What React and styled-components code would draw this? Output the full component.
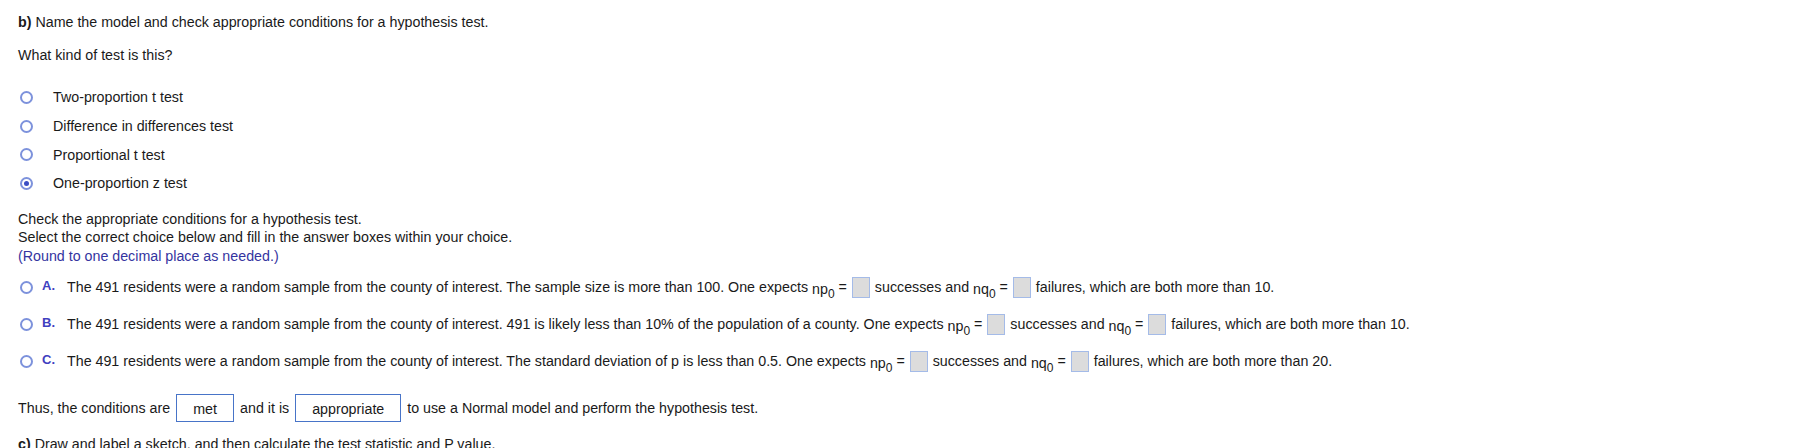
import React from 'react';
import styled, {createGlobalStyle} from 'styled-components';

const Global = createGlobalStyle`
    body {
        margin: 0;
        background: #fff;
        font-family: "Liberation Sans", Arial, sans-serif;
        font-size: 14.25px;
        color: #1a1a1a;
        overflow: hidden;
    }
`;

const Color = {
    RING: '#7d92dc',
    DOT: '#3c4fc4',
    LETTER: '#4040bf',
    NOTE: '#34349f',
    BORDER: '#4874c8',
    CELL: '#dcdcdc',
    CELL_BORDER: '#a4bbe8',
};

const questions = [
    'Two-proportion t test',
    'Difference in differences test',
    'Proportional t test',
    'One-proportion z test',
];

const choices = [
    {
        letter: 'A.',
        lead: 'The 491 residents were a random sample from the county of interest. The sample size is more than 100. One expects',
        limit: 10,
    },
    {
        letter: 'B.',
        lead: 'The 491 residents were a random sample from the county of interest. 491 is likely less than 10% of the population of a county. One expects',
        limit: 10,
    },
    {
        letter: 'C.',
        lead: 'The 491 residents were a random sample from the county of interest. The standard deviation of p is less than 0.5. One expects',
        limit: 20,
    },
];

function Expr ({sym}) {
    return (
        <MathVar>{sym}<Sub>0</Sub></MathVar>
    )
}

function App () {

    return (
        <Page>
            <Global/>
            <Heading><b>b)</b> Name the model and check appropriate conditions for a hypothesis test.</Heading>
            <Question>What kind of test is this?</Question>

            <Options>
                {questions.map((q, i) => (
                    <Option key={q}>
                        <Radio checked={i === 3}/>
                        <OptionLabel>{q}</OptionLabel>
                    </Option>
                ))}
            </Options>

            <Instructions>
                <Line>Check the appropriate conditions for a hypothesis test.</Line>
                <Line>Select the correct choice below and fill in the answer boxes within your choice.</Line>
                <Note>(Round to one decimal place as needed.)</Note>
            </Instructions>

            <Choices>
                {choices.map(c => (
                    <Choice key={c.letter}>
                        <Radio/>
                        <Letter>{c.letter}</Letter>
                        <ChoiceText>
                            {c.lead} <Expr sym="np"/> = <Cell/> successes and <Expr sym="nq"/> = <Cell/> failures, which are both more than {c.limit}.
                        </ChoiceText>
                    </Choice>
                ))}
            </Choices>

            <Conclusion>
                Thus, the conditions are
                <Answer width={58}>met</Answer>
                and it is
                <Answer width={106}>appropriate</Answer>
                to use a Normal model and perform the hypothesis test.
            </Conclusion>

            <Heading next><b>c)</b> Draw and label a sketch, and then calculate the test statistic and P value.</Heading>
        </Page>
    )
}

const Page = styled.div`
    padding: 13px 18px 0;
`;
const Heading = styled.div`
    line-height: 18px;
    margin-top: ${p => p.next ? '13.5px' : '0'};
    b {
        font-weight: bold;
    }
`;
const Question = styled.div`
    line-height: 18px;
    margin-top: 15px;
`;
const Options = styled.div`
    margin-top: 19px;
    display: flex;
    flex-direction: column;
`;
const Option = styled.div`
    height: 28.7px;
    display: flex;
    align-items: center;
    padding-left: 2px;
`;
const Radio = styled.span`
    flex: none;
    box-sizing: border-box;
    width: 13px;
    height: 13px;
    border-radius: 50%;
    border: 2px solid ${Color.RING};
    background: #fff;
    display: flex;
    align-items: center;
    justify-content: center;
    &::after {
        content: '';
        display: ${p => p.checked ? 'block' : 'none'};
        width: 5px;
        height: 5px;
        border-radius: 50%;
        background: ${Color.DOT};
    }
`;
const OptionLabel = styled.span`
    margin-left: 20px;
`;
const Instructions = styled.div`
    margin-top: 12px;
    line-height: 18.5px;
`;
const Line = styled.div`
`;
const Note = styled.div`
    color: ${Color.NOTE};
`;
const Choices = styled.div`
    margin-top: 3.5px;
    display: flex;
    flex-direction: column;
`;
const Choice = styled.div`
    height: 37px;
    display: flex;
    align-items: center;
    padding-left: 2px;
    white-space: nowrap;
`;
const Letter = styled.span`
    width: 25px;
    margin-left: 9px;
    color: ${Color.LETTER};
    font-weight: bold;
    font-size: 13px;
    position: relative;
    top: -2px;
`;
const ChoiceText = styled.span`
    line-height: 18px;
`;
const MathVar = styled.span`
    position: relative;
    top: 2px;
`;
const Sub = styled.sub`
    font-size: 12px;
    vertical-align: -4px;
    line-height: 0;
`;
const Cell = styled.span`
    display: inline-block;
    box-sizing: border-box;
    width: 18px;
    height: 21px;
    margin: 0 1px;
    vertical-align: -6px;
    background: ${Color.CELL};
    border: 1px solid ${Color.CELL_BORDER};
`;
const Conclusion = styled.div`
    margin-top: 13.8px;
    height: 28px;
    display: flex;
    align-items: center;
    gap: 6px;
    white-space: nowrap;
`;
const Answer = styled.span`
    box-sizing: border-box;
    width: ${p => p.width}px;
    height: 28px;
    border: 1px solid ${Color.BORDER};
    display: flex;
    align-items: center;
    justify-content: center;
    padding-top: 2px;
`;

export default App;
